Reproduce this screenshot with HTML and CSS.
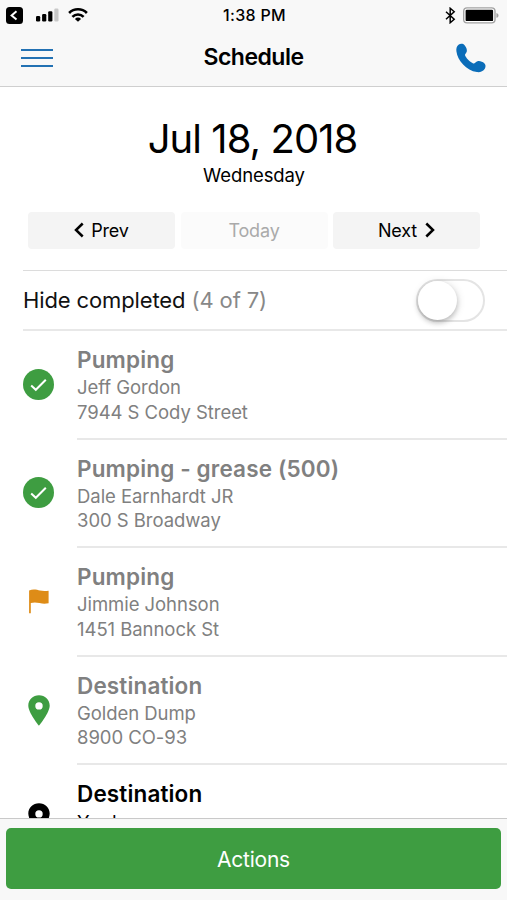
FILE: index.html
```html
<!DOCTYPE html>
<html lang="en">
<head>
<meta charset="utf-8">
<title>Schedule</title>
<link rel="stylesheet" href="styles.css">
</head>
<body>
<div class="app">
  <header class="header">
    <div class="status">
      <div class="status-left">
        <svg class="back" width="17" height="17" viewBox="0 0 17 17"><rect width="17" height="17" rx="3.5"/><path d="M10.500 4.200 5.600 8.400l4.900 4.200" fill="none" stroke="#fff" stroke-width="2"/></svg>
        <svg class="signal" width="23" height="15" viewBox="0 0 23 15"><rect x="0" y="8" width="4.200" height="5.500" rx="1.200"/><rect x="6.100" y="6" width="4.200" height="7.500" rx="1.200"/><rect x="12.200" y="3.200" width="4.200" height="10.300" rx="1.200"/><rect x="18.300" y=".5" width="4.200" height="13" rx="1.200" fill="#c8c8c8"/></svg>
        <svg class="wifi" width="20" height="15" viewBox="0 0 20 15"><g fill="none" stroke="#000" stroke-width="2.600"><path d="M1.100 5a12.600 12.600 0 0 1 17.800 0"/><path d="M4.400 8.900a7.900 7.900 0 0 1 11.200 0"/></g><path d="M10 13.800 6.900 10.900a4.400 4.400 0 0 1 6.200 0z"/></svg>
      </div>
      <div class="clock">1:38 PM</div>
      <div class="status-right">
        <svg width="11" height="17" viewBox="0 0 11 17"><path d="M1 4.700l8.200 7.500-4 3.500V1.300l4 3.500L1 12.300" fill="none" stroke="#000" stroke-width="1.500"/></svg>
        <svg width="36" height="17" viewBox="0 0 36 17"><rect x=".7" y=".9" width="31.300" height="15" rx="3.400" fill="#fff" stroke="#a2a2a2" stroke-width="1.400"/><rect x="2.600" y="2.700" width="27.500" height="11.400" rx="1.200"/><path d="M33.400 6v4.800c1.500-.5 2.100-1.300 2.100-2.400S34.900 6.500 33.400 6z" fill="#a2a2a2"/></svg>
      </div>
    </div>
    <div class="nav">
      <div class="menu"><i></i><i></i><i></i></div>
      <h1 class="title">Schedule</h1>
      <svg class="phone" width="30" height="30" viewBox="0 0 30 30"><path d="M2.500 1.800C4.400.3 7 .3 8.600 2.200c1.500 1.900 2.700 4.300 2.200 6.200-.4 1.500-1.900 2.400-1.800 3.700.2 2.200 5.500 7.500 8.200 8.300 1.600.4 2.600-1.700 4.300-2.200 2.300-.6 5 .5 6.800 2.100 1.500 1.300 1.600 3.500.5 5.400-1.500 2.700-4.800 3.800-7.900 3.400C10.500 27.500 1.400 17.400.4 8.200.1 5.600.7 3.200 2.500 1.800z" fill="#0b6db9"/></svg>
    </div>
  </header>

  <main class="content">
    <section class="day">
      <div class="date">Jul 18, 2018</div>
      <div class="weekday">Wednesday</div>
      <div class="pager">
        <div class="btn"><svg width="10" height="16" viewBox="0 0 10 16"><path d="M8.700 1.500 2 8l6.700 6.500"/></svg><span>Prev</span></div>
        <div class="btn disabled"><span>Today</span></div>
        <div class="btn next"><span>Next</span><svg width="10" height="16" viewBox="0 0 10 16"><path d="M1.300 1.500 8 8l-6.700 6.500"/></svg></div>
      </div>
    </section>

    <div class="filter">
      <div class="filter-label">Hide completed <span>(4 of 7)</span></div>
      <div class="switch"><div class="knob"></div></div>
    </div>

    <div class="list">
      <div class="item">
        <div class="icon"><svg width="32" height="32" viewBox="0 0 32 32"><circle cx="15.500" cy="15.500" r="15.500" fill="#3e9d41"/><path d="M8.200 16.500l4.600 4.300L22.800 10.700" fill="none" stroke="#fff" stroke-width="2"/></svg></div>
        <div class="info"><h2>Pumping</h2><p>Jeff Gordon</p><p>7944 S Cody Street</p></div>
      </div>
      <div class="item">
        <div class="icon"><svg width="32" height="32" viewBox="0 0 32 32"><circle cx="15.500" cy="15.500" r="15.500" fill="#3e9d41"/><path d="M8.200 16.500l4.600 4.300L22.800 10.700" fill="none" stroke="#fff" stroke-width="2"/></svg></div>
        <div class="info"><h2>Pumping - grease (500)</h2><p>Dale Earnhardt JR</p><p>300 S Broadway</p></div>
      </div>
      <div class="item">
        <div class="icon"><svg width="20" height="25" viewBox="0 0 20 25"><path d="M.1 1.500C4-.2 8 .8 11 1.600c3 .7 6 .5 8.600.2v12.500c-3.500.6-6 .5-9-.2-3.500-.8-6-.8-8.800-.1v10.300H.1z" fill="#de8c17"/></svg></div>
        <div class="info"><h2>Pumping</h2><p>Jimmie Johnson</p><p>1451 Bannock St</p></div>
      </div>
      <div class="item">
        <div class="icon"><svg width="22" height="31" viewBox="0 0 22 31"><path fill-rule="evenodd" d="M11 .3C5 .3.300 4.900.300 10.600.300 18 11 30.700 11 30.700S21.700 18 21.700 10.600C21.700 4.900 17 .3 11 .3zm0 6.900a3.700 3.700 0 1 1 0 7.400 3.700 3.700 0 0 1 0-7.400z" fill="#3e9d41"/></svg></div>
        <div class="info"><h2>Destination</h2><p>Golden Dump</p><p>8900 CO-93</p></div>
      </div>
      <div class="item current">
        <div class="icon"><svg width="22" height="31" viewBox="0 0 22 31"><path fill-rule="evenodd" d="M11 .3C5 .3.300 4.900.300 10.600.300 18 11 30.700 11 30.700S21.700 18 21.700 10.600C21.700 4.900 17 .3 11 .3zm0 6.900a3.700 3.700 0 1 1 0 7.400 3.700 3.700 0 0 1 0-7.400z"/></svg></div>
        <div class="info"><h2>Destination</h2><p>Yard</p></div>
      </div>
    </div>
  </main>

  <footer class="footer"><div class="actions">Actions</div></footer>
</div>
</body>
</html>
```
FILE: styles.css
```css
* { box-sizing: border-box; }
body { margin: 0; background: #fff; color: #000; font-family: Inter, "Liberation Sans", sans-serif; }
h1, h2, p { margin: 0; }
svg { display: block; flex: none; }
.app { width: 507px; height: 900px; display: flex; flex-direction: column; overflow: hidden; }

.header { flex: none; height: 87px; background: #f8f8f8; border-bottom: 1px solid #cfcfcf; }
.status { height: 30px; display: grid; grid-template-columns: 1fr auto 1fr; align-items: center; padding: 0 8px 0 6px; }
.status-left, .status-right { display: flex; align-items: center; }
.signal { margin-left: 13px; }
.wifi { margin-left: 9px; }
.clock { font-size: 16px; font-weight: 500; line-height: 30px; letter-spacing: .3px; padding-left: 4px; }
.status-right { justify-content: flex-end; gap: 7px; }
.nav { height: 56px; display: grid; grid-template-columns: 1fr auto 1fr; align-items: center; padding: 0 21px; }
.menu { width: 32px; display: grid; gap: 6px; }
.menu i { height: 2px; background: #2271b3; }
.title { font-size: 23px; font-weight: 600; line-height: 30px; letter-spacing: -.5px; padding-bottom: 2px; }
.phone { justify-self: end; }

.content { flex: 1; min-height: 0; overflow: hidden; }
.day { height: 183px; padding: 27px 27px 0 28px; text-align: center; }
.date { font-size: 40px; line-height: 49px; letter-spacing: -.95px; padding-right: 3px; }
.weekday { font-size: 18.500px; line-height: 24px; letter-spacing: -.1px; }
.pager { display: grid; grid-template-columns: repeat(3, 147px); gap: 5.500px; margin-top: 25px; }
.btn { height: 37px; display: flex; align-items: center; justify-content: center; gap: 7px; background: #f4f4f4; border-radius: 4px; font-size: 18px; letter-spacing: -.15px; }
.btn svg { margin-top: -2px; }
.btn svg path { fill: none; stroke: #000; stroke-width: 2.500; }
.btn.next { gap: 8px; }
.btn.disabled { background: #fbfbfb; color: #aaa; }

.filter { height: 61px; margin-left: 23px; padding-right: 22px; display: flex; align-items: center; justify-content: space-between; border-top: 1px solid #dcdcdc; border-bottom: 2px solid #e8e8e8; }
.filter-label { font-size: 22px; letter-spacing: -.12px; color: #111; }
.filter-label span { color: #888; }
.switch { width: 69px; height: 43px; border: 2px solid #e4e4e4; border-radius: 22px; background: #fff; }
.knob { width: 39px; height: 39px; border-radius: 50%; background: #fff; box-shadow: 0 3px 5px rgba(0, 0, 0, .2), 1px 1px 9px rgba(0, 0, 0, .12); }

.item { height: 108.500px; display: flex; color: #808080; }
.icon { width: 77px; height: 107px; flex: none; display: flex; align-items: center; justify-content: center; }
.info { flex: 1; padding-top: 15px; border-bottom: 2px solid #e8e8e8; }
.info h2 { font-size: 22.500px; font-weight: 600; line-height: 28.500px; letter-spacing: .15px; padding-bottom: .5px; }
.info p { font-size: 18.500px; line-height: 24.500px; letter-spacing: -.05px; }
.current { color: #000; }
.current h2 { padding-bottom: 1.500px; }

.footer { flex: none; height: 82px; padding: 9px 6px 0; background: #f8f8f8; border-top: 1px solid #c9c9c9; }
.actions { height: 61px; border-radius: 5px; background: #3e9d41; color: #fff; font-size: 21px; line-height: 63px; letter-spacing: -.25px; text-align: center; }
```
